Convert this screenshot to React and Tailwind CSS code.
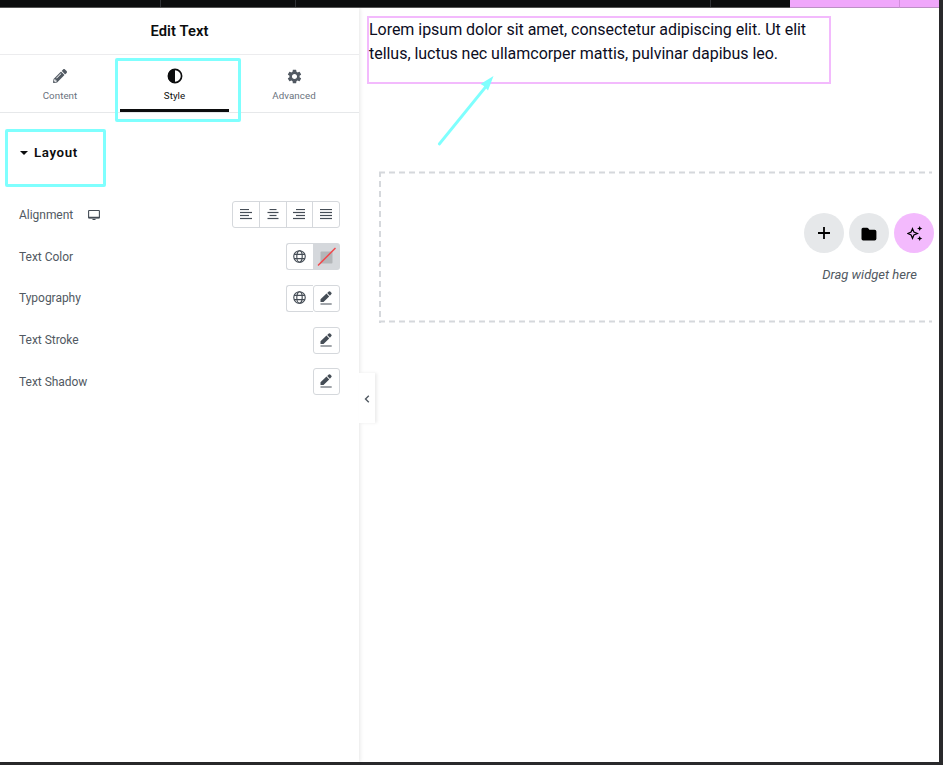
import React from 'react';
import { FaPencilAlt } from 'react-icons/fa';
import { MdSettings } from 'react-icons/md';

const Lines = ({ rows }) => (
  <svg width="12" height="11" viewBox="0 0 12 11" stroke="#454d56" strokeWidth="1.2" fill="none">
    {rows.map(([a, b], i) => (
      <path key={i} d={`M${a} ${i * 3 + 0.5}H${b}`} />
    ))}
  </svg>
);

const Globe = () => (
  <svg width="13" height="13" viewBox="0 0 12 12" fill="none" stroke="#454d56" strokeWidth="1.05">
    <circle cx="6" cy="6" r="5.3" />
    <ellipse cx="6" cy="6" rx="2.5" ry="5.3" />
    <path d="M1 4.1h10M1 7.9h10" />
  </svg>
);

const Edit = () => (
  <svg width="12" height="14" viewBox="0 0 12 14" fill="#454d56" className="mb-px">
    <path d="M.5 11V8.200L6.500 2.600l2.700 2.800L3.500 11zM7.200 2l1.600-1.600q.7-.5 1.400 0l1.200 1.300q.5.700 0 1.400L9.900 4.800zM.5 12.500h11.200v1H.5z" />
  </svg>
);

const EditButton = () => (
  <div className="flex h-[27px] w-[27px] items-center justify-center rounded-[3px] border border-[#d5d8dc] pr-[2px]">
    <Edit />
  </div>
);

const GlobeButton = () => (
  <div className="flex h-[27px] w-[27px] items-center justify-center rounded-l-[3px] border border-r-0 border-[#d5d8dc] pr-px pb-px">
    <Globe />
  </div>
);

const Row = ({ label, icon, children }) => (
  <div className="flex h-[41.75px] items-center justify-between pr-[19px] pl-[19px]">
    <div className="flex items-center gap-[15px] text-[12px] tracking-[-0.03px] text-[#515962]">
      {label}
      {icon}
    </div>
    <div className="flex">{children}</div>
  </div>
);

const Tab = ({ label, children, className }) => (
  <div className={`flex flex-col items-center pt-[13px] text-[9.75px] tracking-[0.05px] ${className}`}>
    <div className="flex h-4 items-center">{children}</div>
    <span className="mt-[5px] leading-[14px]">{label}</span>
  </div>
);

const alignments = [
  [[0, 9], [0, 12], [0, 9], [0, 12]],
  [[2.5, 9.5], [0.5, 11.5], [2.5, 9.5], [0.5, 11.5]],
  [[3, 12], [0, 12], [3, 12], [0, 12]],
  [[0, 12], [0, 12], [0, 12], [0, 12]],
];

function Panel() {
  return (
    <aside className="flex w-[359px] shrink-0 flex-col bg-white shadow-[1px_0_4px_rgba(0,0,0,0.1)]">
      <h1 className="flex h-[47px] items-center justify-center border-b border-[#ececee] pt-px text-[14.7px] font-semibold tracking-[0.1px] text-[#0c0d0e]">
        Edit Text
      </h1>
      <nav className="flex h-[58px] border-b border-[#e6e8ea]">
        <Tab label="Content" className="w-[120px] text-[#69727d]">
          <FaPencilAlt size={14} color="#515962" />
        </Tab>
        <Tab label="Style" className="h-[57px] w-[109px] border-b-3 border-[#0c0d0e] text-[#0c0d0e]">
          <svg width="16" height="16" viewBox="0 0 16 16" fill="none">
            <circle cx="8" cy="8" r="6.6" stroke="#0c0d0e" strokeWidth="1.7" />
            <path d="M8 1a7 7 0 0 0 0 14z" fill="#0c0d0e" />
          </svg>
        </Tab>
        <Tab label="Advanced" className="w-[130px] text-[#69727d]">
          <MdSettings size={17} color="#515962" />
        </Tab>
      </nav>
      <div className="flex h-[81px] items-center pb-[2px] pl-[20px] text-[13.3px] font-semibold tracking-[0.6px] text-[#0c0d0e]">
        <svg width="8" height="4" viewBox="0 0 8 4" className="mt-px mr-[6px]">
          <path d="M0 0h8L4 4z" fill="#0c0d0e" />
        </svg>
        Layout
      </div>
      <Row
        label="Alignment"
        icon={
          <svg width="12" height="12" viewBox="0 0 12 12" fill="none">
            <rect x="0.6" y="1.500" width="10.8" height="7.4" rx="0.5" stroke="#454d56" strokeWidth="1.100" />
            <path d="M0.5 8.500h11" stroke="#454d56" strokeWidth="1.500" />
            <path d="M4.500 10.500h3" stroke="#454d56" />
          </svg>
        }
      >
        <div className="flex h-[27px] w-[108px] divide-x divide-[#d5d8dc] rounded-[3px] border border-[#d5d8dc]">
          {alignments.map((rows, i) => (
            <div key={i} className="flex flex-1 items-center justify-center">
              <Lines rows={rows} />
            </div>
          ))}
        </div>
      </Row>
      <Row label="Text Color">
        <GlobeButton />
        <div className="flex h-[27px] w-[27px] items-center justify-center rounded-r-[3px] bg-[#d5d8dc] pr-px">
          <svg width="19" height="20" viewBox="0 0 19 20">
            <rect x="3.5" y="4.5" width="12" height="12" rx="1" fill="#b3b6b9" />
            <path d="M1 18.5L18.5 1" stroke="#f1484c" strokeWidth="1.5" />
          </svg>
        </div>
      </Row>
      <Row label="Typography">
        <GlobeButton />
        <EditButton />
      </Row>
      <Row label="Text Stroke">
        <EditButton />
      </Row>
      <Row label="Text Shadow">
        <EditButton />
      </Row>
    </aside>
  );
}

function Canvas() {
  return (
    <main className="flex min-w-0 flex-1 flex-col pt-[8px] pl-[8px]">
      <div className="h-[68px] w-[464px] border-2 border-[#f3bafd] text-[16px] leading-[24px] tracking-[-0.032px] whitespace-nowrap text-[#0c0d1e]">
        Lorem ipsum dolor sit amet, consectetur adipiscing elit. Ut elit
        <br />
        tellus, luctus nec ullamcorper mattis, pulvinar dapibus leo.
      </div>
      <div className="mt-[87px] mr-[7px] ml-[12px] flex h-[152px]">
        <svg width="554" height="152" fill="none" stroke="#d5d8dc" strokeWidth="2" strokeDasharray="6 4" className="shrink-0">
          <path d="M0 1.5H553" />
          <path d="M1 1V152" strokeDashoffset="1" />
          <path d="M0 150.5H553" />
        </svg>
        <div className="-ml-[129px] flex w-[130px] shrink-0 flex-col items-center pt-[42px]">
          <div className="flex gap-[5px]">
            <div className="flex h-10 w-10 items-center justify-center rounded-full bg-[#e6e8ea]">
              <svg width="14" height="14" viewBox="0 0 14 14">
                <path d="M7 1v12M1 7h12" stroke="#000" strokeWidth="1.8" />
              </svg>
            </div>
            <div className="flex h-10 w-10 items-center justify-center rounded-full bg-[#e6e8ea]">
              <svg width="16" height="14" viewBox="0 0 16 14" className="mt-px">
                <path d="M2 .8h4.2q.6 0 1 .5l1.2 1.4h5.2q1.8 0 1.8 1.7v7.3q0 1.8-1.8 1.8H2.2Q.5 13.500.5 11.700V2.500Q.5.8 2 .8z" />
              </svg>
            </div>
            <div className="flex h-10 w-10 items-center justify-center rounded-full bg-[#f3bafd]">
              <svg width="16" height="16" viewBox="0 0 16 16" className="ml-[2px]">
                <path d="M5.500 3.700L6.900 7.100l3.500 1.400-3.500 1.400-1.400 3.400-1.400-3.400L.8 8.500l3.300-1.400z" fill="none" stroke="#000" strokeWidth="1.200" />
                <path d="M12.700 1l.8 1.700 1.800.8-1.800.8-.8 1.700-.8-1.700-1.800-.8 1.800-.8zM12.700 11l.8 1.700 1.800.8-1.800.8-.8 1.700-.8-1.700-1.800-.8 1.800-.8z" />
              </svg>
            </div>
          </div>
          <div className="mt-[13px] pl-px text-[13px] leading-[18px] whitespace-nowrap text-[#515962] italic">
            Drag widget here
          </div>
        </div>
      </div>
    </main>
  );
}

export default function App() {
  return (
    <div className="relative flex h-[765px] w-[943px] overflow-hidden bg-[#29292b] font-['Roboto',sans-serif]">
      <div className="flex h-[762px] w-[939px] flex-col bg-white">
        <header className="z-10 flex h-[8px] shrink-0 border-b border-[#555] bg-[#0c0d0e]">
          <div className="w-[161px] border-r border-[#303236]" />
          <div className="w-[135px] border-r border-[#303236]" />
          <div className="w-[415px] border-r border-[#303236]" />
          <div className="w-[79px]" />
          <div className="h-[8px] w-[110px] border-r border-b border-[#d18fdb] border-b-[#bd8fc5] bg-[#f0a7fb]" />
          <div className="h-[8px] flex-1 border-b border-[#bd8fc5] bg-[#f0a7fb]" />
        </header>
        <div className="flex min-h-0 flex-1">
          <Panel />
          <Canvas />
        </div>
      </div>

      {/* panel collapse handle */}
      <div className="absolute top-[373px] left-[359px] flex h-[50px] w-[16px] items-center justify-center bg-white pt-px shadow-[2px_0_3px_rgba(0,0,0,0.08)]">
        <svg width="6" height="8" viewBox="0 0 6 8" fill="none" stroke="#515962" strokeWidth="1.400">
          <path d="M4.800.7L1.500 4l3.300 3.300" />
        </svg>
      </div>

      {/* highlight annotations */}
      <div className="absolute top-[58px] left-[115px] h-[64px] w-[126px] rounded-[2px] border-3 border-[#7ffffe]" />
      <div className="absolute top-[129px] left-[5px] h-[58px] w-[101px] rounded-[2px] border-3 border-[#7ffffe]" />
      <svg className="absolute top-[74px] left-[436px]" width="60" height="74" viewBox="0 0 60 74">
        <path d="M3.300 70L50 12.500" stroke="#7ffffe" strokeWidth="2.800" strokeLinecap="round" />
        <path d="M57.500 2L44.500 10l3 1.800 2.500 2.400 2 2.300z" fill="#7ffffe" />
      </svg>
    </div>
  );
}
